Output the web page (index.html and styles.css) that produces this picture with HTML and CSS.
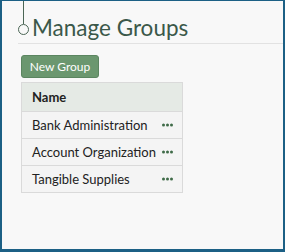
FILE: index.html
```html
<!DOCTYPE html>
<html lang="en">
<head>
    <meta charset="UTF-8">
    <meta name="viewport" content="width=device-width, initial-scale=1.0">
    <title>Manage Groups</title>
    <link rel="stylesheet" href="styles.css">
</head>
<body>
    <div class="frame">
        <div class="title-row">
            <div class="marker">
                <span class="marker-line"></span>
                <span class="marker-dot"></span>
            </div>
            <h1>Manage Groups</h1>
        </div>
        <div class="content">
            <button class="new-btn">New Group</button>
            <table class="groups">
                <thead>
                    <tr><th>Name</th></tr>
                </thead>
                <tbody>
                    <tr><td>Bank Administration<svg class="dots" width="11" height="4" viewBox="0 0 11 4"><circle cx="1.5" cy="2" r="1.5"/><circle cx="5.5" cy="2" r="1.5"/><circle cx="9.5" cy="2" r="1.5"/></svg></td></tr>
                    <tr><td>Account Organization<svg class="dots" width="11" height="4" viewBox="0 0 11 4"><circle cx="1.5" cy="2" r="1.5"/><circle cx="5.5" cy="2" r="1.5"/><circle cx="9.5" cy="2" r="1.5"/></svg></td></tr>
                    <tr><td>Tangible Supplies<svg class="dots" width="11" height="4" viewBox="0 0 11 4"><circle cx="1.5" cy="2" r="1.5"/><circle cx="5.5" cy="2" r="1.5"/><circle cx="9.5" cy="2" r="1.5"/></svg></td></tr>
                </tbody>
            </table>
        </div>
    </div>
</body>
</html>
```

FILE: styles.css
```css
html, body {
    margin: 0;
    padding: 0;
}
body {
    font-family: Lato, "Open Sans", sans-serif;
    width: 285px;
    height: 252px;
}
.frame {
    box-sizing: border-box;
    width: 285px;
    height: 252px;
    background-color: #f8f8f8;
    border: 2px solid #1c6085;
    border-top-width: 1px;
    border-bottom-width: 3px;
}
.title-row {
    display: flex;
    align-items: flex-end;
    height: 42px;
    margin-left: 16px;
    border-bottom: 1px solid #e2e2e2;
}
.marker {
    display: flex;
    flex-direction: column;
    align-items: center;
    width: 11px;
    height: 100%;
    padding-bottom: 8px;
    box-sizing: border-box;
}
.marker-line {
    width: 1.5px;
    flex: 1;
    background-color: #4b6655;
}
.marker-dot {
    box-sizing: border-box;
    width: 11px;
    height: 11px;
    border: 1.5px solid #4b6655;
    border-radius: 50%;
}
h1 {
    margin: 0 0 0 3px;
    font-size: 22.5px;
    font-weight: normal;
    color: #3b584a;
    line-height: 30px;
}
.content {
    padding: 11px 0 0 19px;
}
.new-btn {
    display: block;
    width: 78px;
    height: 23px;
    padding: 0;
    background-color: #6b976f;
    border: 1px solid #5b8560;
    border-radius: 3px;
    color: #ffffff;
    font-family: inherit;
    font-size: 12px;
}
table.groups {
    margin-top: 4px;
    width: 162px;
    border-collapse: collapse;
    border: 1px solid #dadada;
}
th, td {
    border: 1px solid #dadada;
    text-align: left;
    color: #222222;
    font-size: 13px;
    padding: 0 10px;
    white-space: nowrap;
}
th {
    height: 28px;
    background-color: #e5eae5;
    font-weight: bold;
}
td {
    height: 26px;
    background-color: #f4f4f4;
}
.dots {
    float: right;
    margin-top: 6px;
    margin-right: -1px;
    fill: #3f6b48;
}
```
